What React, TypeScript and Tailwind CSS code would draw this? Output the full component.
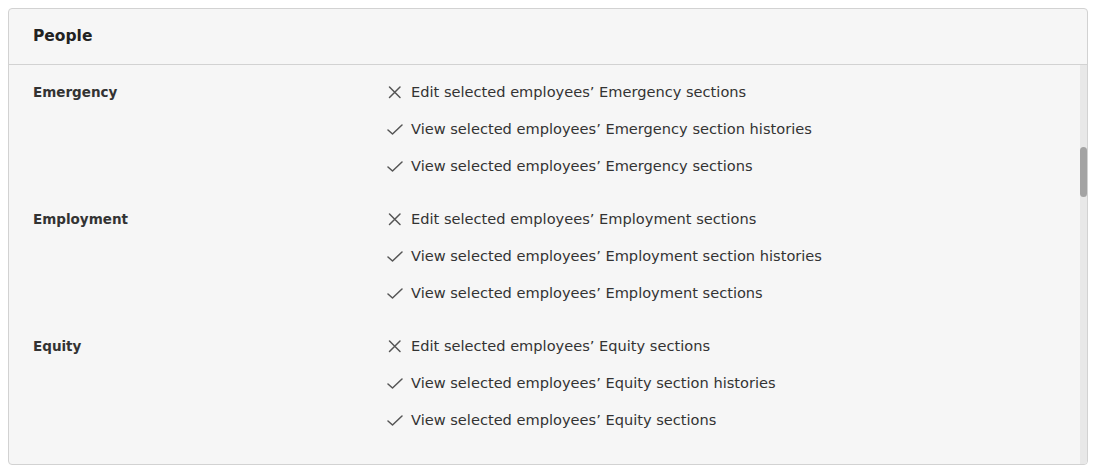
const GROUPS = [
  {
    name: 'Emergency',
    items: [
      { ok: false, text: 'Edit selected employees’ Emergency sections' },
      { ok: true, text: 'View selected employees’ Emergency section histories' },
      { ok: true, text: 'View selected employees’ Emergency sections' },
    ],
  },
  {
    name: 'Employment',
    items: [
      { ok: false, text: 'Edit selected employees’ Employment sections' },
      { ok: true, text: 'View selected employees’ Employment section histories' },
      { ok: true, text: 'View selected employees’ Employment sections' },
    ],
  },
  {
    name: 'Equity',
    items: [
      { ok: false, text: 'Edit selected employees’ Equity sections' },
      { ok: true, text: 'View selected employees’ Equity section histories' },
      { ok: true, text: 'View selected employees’ Equity sections' },
    ],
  },
]

function CrossIcon() {
  return (
    <svg width="16" height="16" viewBox="0 0 16 16" fill="none" className="shrink-0">
      <path d="M2.5 3 L13 13.5 M13 3 L2.5 13.5" stroke="#555" strokeWidth="1.5" strokeLinecap="round" />
    </svg>
  )
}

function CheckIcon() {
  return (
    <svg width="16" height="16" viewBox="0 0 16 16" fill="none" className="shrink-0">
      <path d="M1 9 L5.5 13 L15 4" stroke="#555" strokeWidth="1.5" strokeLinecap="round" strokeLinejoin="round" />
    </svg>
  )
}

export default function App() {
  return (
    <div className="w-[1097px] h-[475px] bg-white p-2" style={{ fontFamily: '"DejaVu Sans", "Open Sans", sans-serif' }}>
      <div className="w-[1080px] h-[457px] flex flex-col rounded-[4px] border border-[#d2d2d2] bg-[#f6f6f6] overflow-hidden">
        {/* Header */}
        <div className="h-[56px] shrink-0 flex items-center px-6 border-b border-[#d2d2d2]">
          <h2 className="text-[15.5px] font-bold text-[#222]">People</h2>
        </div>

        {/* Body */}
        <div className="flex-1 flex min-h-0">
          <div className="flex-1 pt-[9px] pl-6 flex flex-col gap-4">
            {GROUPS.map((g) => (
              <div key={g.name} className="flex">
                <div className="w-[354px] h-[37px] flex items-center text-[13.5px] font-bold text-[#333]">
                  {g.name}
                </div>
                <div className="flex flex-col">
                  {g.items.map((item) => (
                    <div key={item.text} className="h-[37px] pb-[2px] flex items-center gap-[8px] text-[14.6px] text-[#333]">
                      {item.ok ? <CheckIcon /> : <CrossIcon />}
                      <span>{item.text}</span>
                    </div>
                  ))}
                </div>
              </div>
            ))}
          </div>

          {/* Scrollbar */}
          <div className="w-[7px] bg-[#e8e8e8] pt-[82px]">
            <div className="h-[50px] rounded-full bg-[#a3a3a3]" />
          </div>
        </div>
      </div>
    </div>
  )
}
